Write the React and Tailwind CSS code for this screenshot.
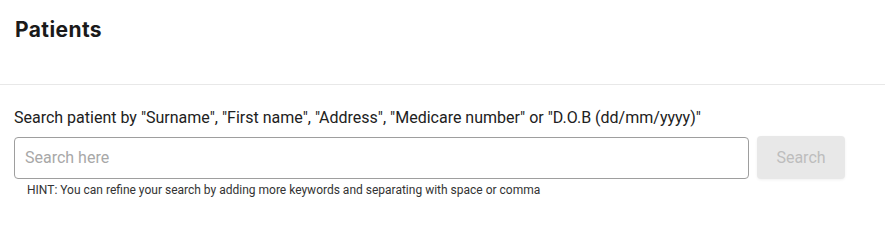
export default function App() {
  return (
    <div className="w-[885px] h-[209px] bg-white overflow-hidden" style={{ fontFamily: "Roboto, 'Liberation Sans', sans-serif" }}>
      <div className="h-[85px] border-b border-[#e8e8e8] px-[15px] pt-[15px]">
        <h1 className="text-[21px] leading-[30px] font-bold tracking-[0.4px] text-[#1a1a1a]" style={{ fontFamily: "Inter, 'Open Sans', sans-serif" }}>Patients</h1>
      </div>
      <div className="px-[14px] pt-[23px]">
        <p className="text-[16px] leading-[20px] text-[#212121]">Search patient by "Surname", "First name", "Address", "Medicare number" or "D.O.B (dd/mm/yyyy)"</p>
        <div className="flex items-center gap-[8px] mt-[8px]">
          <input
            className="w-[735px] h-[42px] border border-[#9e9e9e] rounded-[4px] px-[10px] text-[16px] text-[#212121] placeholder:text-[#a8a8a8] outline-none"
            placeholder="Search here"
          />
          <button className="w-[88px] h-[43px] rounded-[4px] bg-[#e8e8e8] text-[#bdbdbd] text-[16px] shadow-[0_1px_3px_rgba(0,0,0,0.06)]">Search</button>
        </div>
        <p className="text-[12px] leading-[14px] text-[#333] pl-[13px] mt-[4px]">HINT: You can refine your search by adding more keywords and separating with space or comma</p>
      </div>
    </div>
  );
}
